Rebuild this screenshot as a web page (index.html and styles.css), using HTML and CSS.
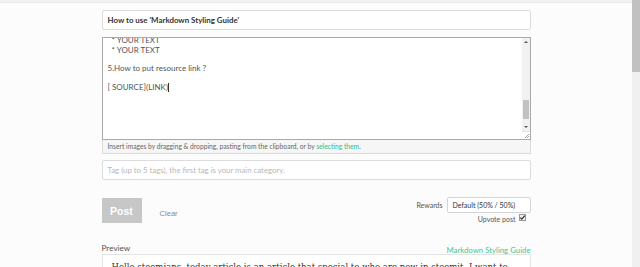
FILE: index.html
```html
<!DOCTYPE html>
<html lang="en">
<head>
  <meta charset="UTF-8" />
  <title>Submit a Story</title>
  <link rel="stylesheet" href="styles.css">
</head>
<body>
  <div class="window">
    <div class="page">
      <div class="topbar"></div>

      <div class="editor">
        <div class="field title-field">How to use 'Markdown Styling Guide'</div>

        <div class="body-box">
          <div class="body-text">
            <div class="line">&nbsp; * YOUR TEXT</div>
            <div class="line">&nbsp; * YOUR TEXT</div>
            <div class="line">&nbsp;</div>
            <div class="line">5.How to put resource link ?</div>
            <div class="line">&nbsp;</div>
            <div class="line">[ SOURCE](LINK)<span class="caret"></span></div>
          </div>
          <div class="inner-scroll">
            <div class="arrow up"></div>
            <div class="track"><div class="thumb"></div></div>
            <div class="arrow down"></div>
            <div class="grip"></div>
          </div>
        </div>
        <div class="dropzone">Insert images by dragging &amp; dropping, pasting from the clipboard, or by <a href="#">selecting them</a>.</div>

        <div class="field tag-field">Tag (up to 5 tags), the first tag is your main category.</div>

        <div class="actions">
          <div class="buttons">
            <button class="btn-post">Post</button>
            <span class="btn-clear">Clear</span>
          </div>
          <div class="options">
            <div class="rewards">
              <span class="label">Rewards</span>
              <div class="select">Default (50% / 50%)</div>
            </div>
            <div class="upvote">
              <span>Upvote post</span>
              <span class="check">
                <svg width="7" height="7" viewBox="0 0 7 7"><path d="M1.3 3.6 L2.8 5.1 L5.8 1.6" fill="none" stroke="#333" stroke-width="1.3"/></svg>
              </span>
            </div>
          </div>
        </div>

        <div class="preview-head">
          <span class="preview-label">Preview</span>
          <a href="#" class="guide-link">Markdown Styling Guide</a>
        </div>
        <div class="preview-box">
          <p>Hello steemians, today article is an article that special to who are new in steemit. I want to</p>
        </div>
      </div>
    </div>

    <div class="page-scroll">
      <div class="page-thumb"></div>
    </div>
  </div>
</body>
</html>
```

FILE: styles.css
```css
html, body {
  margin: 0;
  height: 100%;
  overflow: hidden;
}

body {
  font-family: Lato, "Noto Sans", sans-serif;
  background: #fcfcfc;
  color: #333;
}

.window {
  display: flex;
  height: 267px;
}

.page {
  flex: 1;
  overflow: hidden;
}

.topbar {
  height: 2px;
  background: #f2f2f2;
  border-bottom: 1px solid #ebebeb;
}

.editor {
  width: 429px;
  margin: 7px auto 0;
}

.field {
  height: 18px;
  line-height: 18px;
  border: 1px solid #dcdcdc;
  border-radius: 2px;
  background: #fff;
  padding: 0 5px;
  font-size: 7.9px;
}

.title-field {
  font-weight: 700;
  color: #333;
}

.body-box {
  margin-top: 7px;
  height: 101px;
  border: 1px solid #a9a9a9;
  background: #fff;
  display: flex;
}

.body-text {
  flex: 1;
  overflow: hidden;
  padding: 0 5px;
  font-size: 8px;
  color: #555;
}

.line {
  height: 9.4px;
  line-height: 9.4px;
  white-space: pre;
}

.line:first-child {
  margin-top: -1.8px;
}

.caret {
  display: inline-block;
  width: 1px;
  height: 9px;
  background: #333;
  vertical-align: -2px;
}

.inner-scroll {
  width: 8px;
  display: flex;
  flex-direction: column;
  background: #f1f1f1;
}

.arrow {
  height: 8px;
  display: flex;
  align-items: center;
  justify-content: center;
}

.arrow::before {
  content: "";
  border-left: 2px solid transparent;
  border-right: 2px solid transparent;
}

.arrow.up::before {
  border-bottom: 2px solid #555;
}

.arrow.down::before {
  border-top: 2px solid #555;
}

.track {
  flex: 1;
  display: flex;
  flex-direction: column;
  justify-content: flex-end;
  padding: 0 1px 4px;
}

.thumb {
  height: 19px;
  background: #c1c1c1;
}

.grip {
  height: 7px;
  background: #fff;
  border-top: 1px solid #e6e6e6;
  position: relative;
}

.grip::after {
  content: "";
  position: absolute;
  right: 1px;
  bottom: 1px;
  width: 4px;
  height: 4px;
  background: linear-gradient(135deg, transparent 45%, #aaa 45%, #aaa 55%, transparent 55%, transparent 75%, #aaa 75%, #aaa 85%, transparent 85%);
}

.dropzone {
  height: 13px;
  line-height: 13px;
  border: 1px solid #dcdcdc;
  border-top: none;
  background: #f6f6f6;
  padding: 0 5px;
  font-size: 6.7px;
  color: #666;
}

.dropzone a {
  color: #1fbf8f;
  text-decoration: none;
}

.tag-field {
  margin-top: 6px;
  color: #b8b8b8;
  font-size: 7.8px;
}

.actions {
  margin-top: 17px;
  display: flex;
  justify-content: space-between;
  align-items: flex-start;
}

.buttons {
  display: flex;
  align-items: center;
}

.btn-post {
  width: 40px;
  height: 25px;
  border: none;
  background: #c7c7c7;
  color: #fff;
  font-family: "Liberation Sans", Arial, sans-serif;
  font-weight: 700;
  font-size: 10.5px;
  padding: 0;
  margin-top: 1px;
}

.btn-clear {
  margin-left: 18px;
  margin-top: 7px;
  font-family: "Liberation Sans", Arial, sans-serif;
  font-size: 7.6px;
  color: #888;
}

.options {
  display: flex;
  flex-direction: column;
  align-items: flex-end;
}

.rewards {
  display: flex;
  align-items: center;
  gap: 4px;
}

.label {
  font-size: 7px;
  color: #555;
}

.select {
  width: 77px;
  height: 14px;
  line-height: 14px;
  border: 1px solid #d4d4d4;
  border-radius: 2px;
  background: #fff;
  padding: 0 0 0 5px;
  font-size: 7px;
  color: #333;
}

.upvote {
  margin-top: 2px;
  margin-right: 5px;
  display: flex;
  align-items: center;
  gap: 3px;
  font-size: 7px;
  color: #555;
}

.check {
  width: 7px;
  height: 7px;
  border: 1px solid #999;
  box-sizing: border-box;
  background: #eee;
  display: flex;
  margin-top: -3px;
}

.check svg {
  margin: -1px;
}

.preview-head {
  margin-top: 20px;
  display: flex;
  justify-content: space-between;
  align-items: flex-start;
  height: 10px;
}

.preview-label {
  font-size: 8.2px;
  color: #555;
}

.guide-link {
  margin-top: 2px;
  font-size: 7.8px;
  color: #3fc699;
  text-decoration: none;
}

.preview-box {
  margin-top: 1px;
  border: 1px solid #e4e4e4;
  background: #fff;
  padding: 7px 9px 5px;
  height: 40px;
}

.preview-box p {
  margin: 0;
  font-family: "DejaVu Serif", serif;
  font-size: 8.55px;
  color: #333;
  white-space: nowrap;
}

.page-scroll {
  width: 8px;
  background: #f0f0f0;
}

.page-thumb {
  height: 72px;
  background: #c1c1c1;
}
```
